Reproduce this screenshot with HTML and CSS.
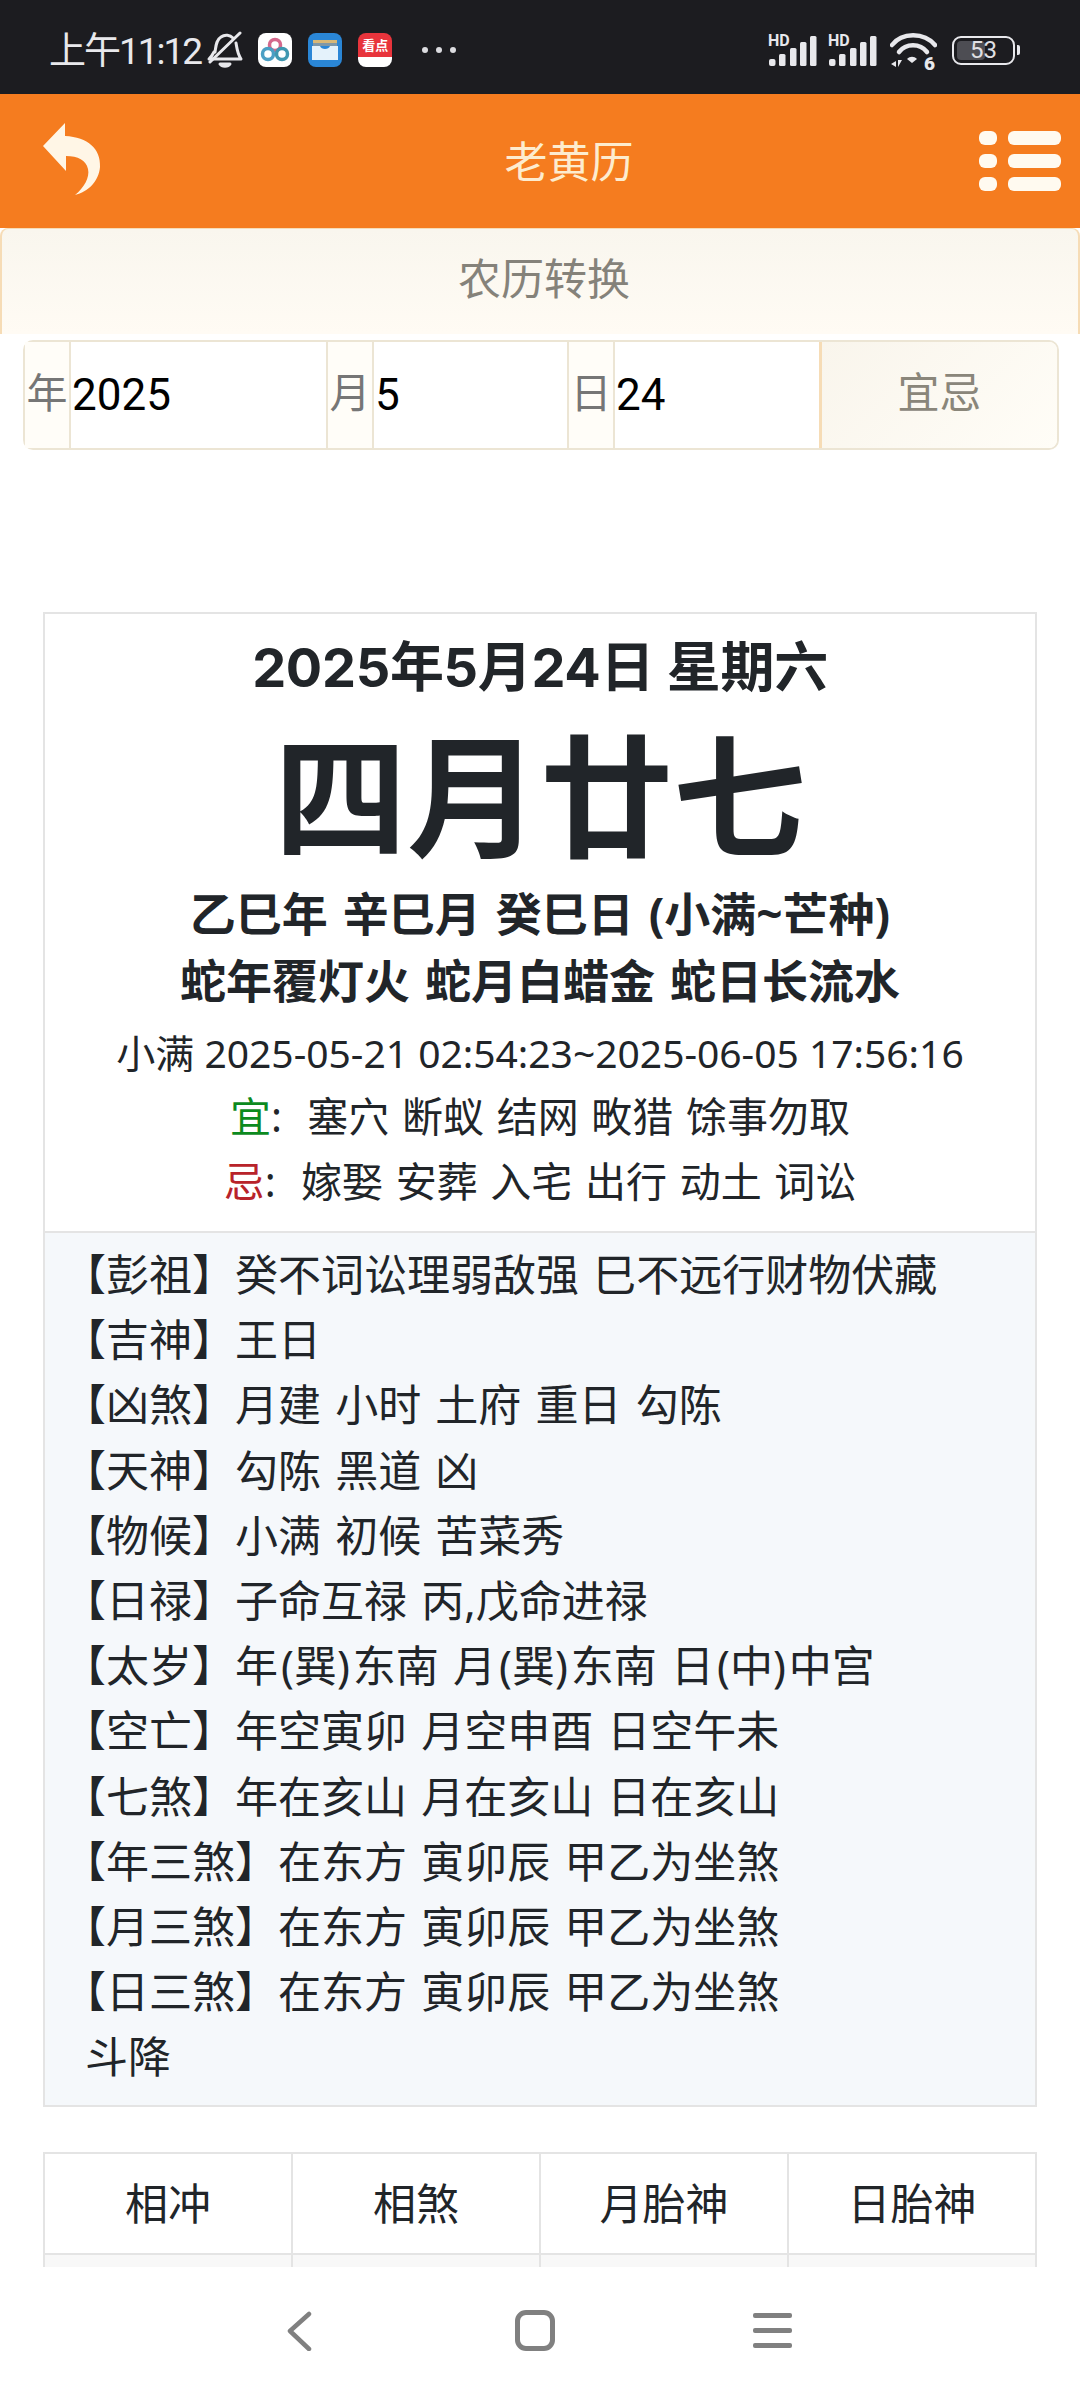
FILE: index.html
```html
<!DOCTYPE html>
<html lang="zh-CN">
<head>
<meta charset="utf-8" />
<meta name="viewport" content="width=device-width,initial-scale=1" />
<title>老黄历</title>
<link rel="stylesheet" href="styles.css">
</head>
<body>
<div class="phone">

  <!-- status bar -->
  <div class="status">
    <div class="statusLeft">
      <span class="clock">上午11:12</span>
      <svg class="bell" viewBox="0 0 36 38" fill="none" stroke="#e8e8ec" stroke-width="3" stroke-linecap="round" stroke-linejoin="round">
        <path d="M8 21 C9 15 9 9 14 6 C18 3 23 4 26 7"/>
        <path d="M29 12 C30 17 30 22 34 28 L2 28 C5 25 6 23 7 21"/>
        <path d="M3 31 L33 2"/>
        <path d="M13 33 C15 36 21 36 23 33 Z" fill="#e8e8ec"/>
      </svg>
      <div class="appIcons">
        <svg class="app" viewBox="0 0 34 34">
          <rect width="34" height="34" rx="8" fill="#fff"/>
          <circle cx="17" cy="12" r="5.5" fill="none" stroke="#d4688c" stroke-width="3.5"/>
          <circle cx="10" cy="21" r="5.5" fill="none" stroke="#4b9fc4" stroke-width="3.5"/>
          <circle cx="24" cy="21" r="5.5" fill="none" stroke="#3f97b0" stroke-width="3.5"/>
        </svg>
        <svg class="app" viewBox="0 0 34 34">
          <rect width="34" height="34" rx="8" fill="#2a86d6"/>
          <rect x="5" y="7" width="24" height="3" fill="#d8b877"/>
          <rect x="5" y="10" width="24" height="3" fill="#7f98a8"/>
          <path d="M4 13 L12 13 C13 17 21 17 22 13 L30 13 L30 27 L4 27 Z" fill="#e4f2fb"/>
        </svg>
        <div class="app kandian"><span>看点</span></div>
      </div>
      <div class="moreDots"><i></i><i></i><i></i></div>
    </div>
    <div class="statusRight">
      <svg class="signal" viewBox="0 -8 49 40">
        <text x="0" y="12" class="hd">HD</text>
        <g fill="#e8e8ec">
          <rect x="1" y="25" width="6.5" height="7" rx="2"/>
          <rect x="11" y="20" width="6.5" height="12" rx="1.5"/>
          <rect x="22" y="14" width="6.5" height="18" rx="1.5"/>
          <rect x="32" y="8" width="6.5" height="24" rx="1.5"/>
          <rect x="42" y="2" width="6.5" height="30" rx="1.5"/>
        </g>
      </svg>
      <svg class="signal" viewBox="0 -8 49 40">
        <text x="0" y="12" class="hd">HD</text>
        <g fill="#e8e8ec">
          <rect x="1" y="25" width="6.5" height="7" rx="2"/>
          <rect x="11" y="20" width="6.5" height="12" rx="1.5"/>
          <rect x="22" y="14" width="6.5" height="18" rx="1.5"/>
          <rect x="32" y="8" width="6.5" height="24" rx="1.5"/>
          <rect x="42" y="2" width="6.5" height="30" rx="1.5"/>
        </g>
      </svg>
      <svg class="wifi" viewBox="0 0 47 46" fill="none" stroke="#e8e8ec" stroke-width="4.5" stroke-linecap="round">
        <path d="M2 14 C12 1 34 1 45 14"/>
        <path d="M9 21 C16 12 30 12 37 21"/>
        <path d="M17 28 L22 32 L27 28 C24 25 20 25 17 28 Z" fill="#e8e8ec" stroke="none"/>
        <path d="M1 33 L6 30 L6 36 Z M8 29 L8 36 L12 29 Z" fill="#e8e8ec" stroke="none"/>
        <text x="34" y="39" class="wifiSix">6</text>
      </svg>
      <div class="battery">
        <div class="batteryBody"><i></i><span>53</span></div>
        <div class="batteryNub"></div>
      </div>
    </div>
  </div>

  <!-- orange header -->
  <header class="topbar">
    <svg class="backArrow" viewBox="43 124 58 72"><path d="M43 147 L65 124 L65 137 C88 138 101 150 100 168 C99 182 88 193 75 196 C84 189 90 178 88 170 C86 161 78 157 66 157 L66 172 Z"/></svg>
    <div class="topTitle">老黄历</div>
    <div class="menuBtn">
      <div class="menuRow"><i></i><b></b></div>
      <div class="menuRow"><i></i><b></b></div>
      <div class="menuRow"><i></i><b></b></div>
    </div>
  </header>

  <div class="subhead">农历转换</div>

  <div class="content">
    <!-- date form -->
    <div class="dateForm">
      <div class="addon">年</div>
      <div class="field fieldY">2025</div>
      <div class="addon">月</div>
      <div class="field fieldM">5</div>
      <div class="addon">日</div>
      <div class="field fieldD">24</div>
      <div class="goBtn">宜忌</div>
    </div>

    <!-- main card -->
    <div class="card">
      <div class="cardTop">
        <div class="solar">2025年5月24日 星期六</div>
        <div class="lunar">四月廿七</div>
        <div class="ganzhi">乙巳年 辛巳月 癸巳日 (小满~芒种)</div>
        <div class="ganzhi">蛇年覆灯火 蛇月白蜡金 蛇日长流水</div>
        <div class="term">小满 2025-05-21 02:54:23~2025-06-05 17:56:16</div>
        <div class="yiji"><span class="yi">宜</span>:&nbsp; 塞穴 断蚁 结网 畋猎 馀事勿取</div>
        <div class="yiji"><span class="ji">忌</span>:&nbsp; 嫁娶 安葬 入宅 出行 动土 词讼</div>
      </div>
      <div class="cardList">
        <div>【彭祖】癸不词讼理弱敌强 巳不远行财物伏藏</div>
        <div>【吉神】王日</div>
        <div>【凶煞】月建 小时 土府 重日 勾陈</div>
        <div>【天神】勾陈 黑道 凶</div>
        <div>【物候】小满 初候 苦菜秀</div>
        <div>【日禄】子命互禄 丙,戊命进禄</div>
        <div>【太岁】年<span class="dir">(巽)</span>东南 月<span class="dir">(巽)</span>东南 日<span class="dir">(中)</span>中宫</div>
        <div>【空亡】年空寅卯 月空申酉 日空午未</div>
        <div>【七煞】年在亥山 月在亥山 日在亥山</div>
        <div>【年三煞】在东方 寅卯辰 甲乙为坐煞</div>
        <div>【月三煞】在东方 寅卯辰 甲乙为坐煞</div>
        <div>【日三煞】在东方 寅卯辰 甲乙为坐煞</div>
        <div class="extra">斗降</div>
      </div>
    </div>

    <table class="godTable">
      <tr><th>相冲</th><th>相煞</th><th>月胎神</th><th>日胎神</th></tr>
      <tr class="nextRow"><td></td><td></td><td></td><td></td></tr>
    </table>
  </div>

  <!-- system nav -->
  <nav class="sysnav">
    <svg class="navBack" viewBox="0 0 28 40" fill="none" stroke="#808080" stroke-width="4.5" stroke-linecap="round" stroke-linejoin="round"><path d="M24 3 L5 20 L24 38"/></svg>
    <div class="navHome"></div>
    <div class="navMenu"><i></i><i></i><i></i></div>
  </nav>
</div>
</body>
</html>
```

FILE: styles.css
```css
/* ===== base ===== */
*{box-sizing:border-box}
html,body{margin:0;background:#fff;color:#212529;font:400 42px/1.5 "Noto Sans","Noto Sans CJK SC",sans-serif}
.phone{width:1080px;height:2400px;display:flex;flex-direction:column;overflow:hidden}

/* ===== status bar ===== */
.status{height:94px;flex:none;background:#1c1c20;display:flex;justify-content:space-between;align-items:center;padding:6px 60px 0 49px}
.statusLeft,.statusRight{display:flex;align-items:center}
.clock{font:400 37px/1 "Roboto","Noto Sans CJK SC",sans-serif;letter-spacing:-2px;color:#e8e8ec;white-space:nowrap;padding-top:2px}
.bell{width:36px;height:38px;margin-left:6px}
.appIcons{display:flex;gap:16px;margin-left:15px}
.app{width:34px;height:34px;display:block}
.kandian{border-radius:8px;overflow:hidden;background:linear-gradient(#e8343c 0 72%,#fff 72%);text-align:center}
.kandian span{display:block;font:700 13px/24px "Noto Sans CJK SC",sans-serif;color:#fff;white-space:nowrap}
.moreDots{display:flex;gap:8px;margin-left:30px}
.moreDots i{width:6px;height:6px;border-radius:50%;background:#dcdce0}

.statusRight svg{display:block}
.signal{width:49px;height:40px;margin:-8px 11px 0 0}
.hd{font:700 16px "Roboto",sans-serif;fill:#e8e8ec}
.wifi{width:47px;height:46px;margin:0 0 -7px 2px}
.wifiSix{font:900 19px "Roboto",sans-serif;fill:#e8e8ec;stroke:none}
.battery{display:flex;align-items:center;margin-left:15px}
.batteryBody{position:relative;width:63px;height:29px;border:2.5px solid #e8e8ec;border-radius:9px;text-align:center;font:400 24px/24px "Roboto",sans-serif;color:#e0e0e4}
.batteryBody i{position:absolute;left:3px;top:3px;bottom:3px;width:28px;background:#4d4d53;border-radius:4px}
.batteryBody span{position:relative}
.batteryNub{width:3px;height:10px;margin-left:2px;background:#e8e8ec;border-radius:0 2px 2px 0}

/* ===== orange header ===== */
.topbar{height:134px;flex:none;background:#f57c1f;display:flex;justify-content:space-between;align-items:center;padding:0 19px 0 43px}
.backArrow{width:58px;height:72px;fill:#fff6e6;margin-top:-4px}
.topTitle{margin-left:58px;font-size:43px;line-height:1;color:#fdeccf}
.menuBtn{display:flex;flex-direction:column;gap:9px;margin-top:-1px}
.menuRow{display:flex;gap:11px}
.menuRow i{width:18px;height:14px;border-radius:6px;background:#fffaf0}
.menuRow b{width:53px;height:14px;border-radius:6px;background:#fffaf0}

/* ===== sub header ===== */
.subhead{height:106px;flex:none;background:linear-gradient(#f9f6ee,#fffbf4);border:solid #f6dcb6;border-width:1px 2px 0;border-radius:8px 8px 0 0;padding-left:8px;text-align:center;font-size:43px;line-height:100px;color:#85827a}

/* ===== content scroll area ===== */
.content{flex:1;min-height:0;overflow:hidden;padding-top:6px}

.dateForm{height:110px;margin:0 21px 0 23px;display:flex;border:2px solid #ece5d4;border-radius:10px;font-size:42px;line-height:100px}
.addon{flex:none;width:46px;text-align:center;color:#767676;background:#fffdf8;border-right:2px solid #ece5d4;white-space:nowrap;overflow:visible;font-size:41px}
.field{flex:none;color:#000;background:#fff;padding-left:1px;border-right:2px solid #ece5d4;font-family:"Roboto","Noto Sans CJK SC",sans-serif;font-size:44px;line-height:106px}
.fieldY{width:257px}
.fieldM{width:195px}
.fieldD{width:207px;border-right:3px solid #f6dcb6}
.goBtn{flex:1;text-align:center;color:#8a867a;background:linear-gradient(135deg,#f9f5ec,#fffdf7);border-radius:0 8px 8px 0}

/* ===== main card ===== */
.card{margin:162px 43px 0;border:2px solid #e4e4e4}
.cardTop{text-align:center;padding:22px 0 17px;background:#fff}
.solar{font-family:"Inter","Noto Sans CJK SC",sans-serif;font-size:54px;font-weight:700;letter-spacing:-.3px;line-height:64px;white-space:nowrap}
.lunar{font-size:133px;font-weight:700;line-height:136px;margin-top:28px;white-space:nowrap}
.ganzhi{font-size:46px;font-weight:700;line-height:67px;word-spacing:3px}
.lunar + .ganzhi{margin-top:16px}
.term{font-size:39px;line-height:62px;margin-top:8px;white-space:nowrap}
.yiji{font-size:41px;line-height:65px;word-spacing:2px}
.yi{color:#0c8a1e}
.ji{color:#b8232a}

.cardList{background:#f5f8fb;border-top:2px solid #e4e4e4;padding:9px 0 15px 18px;font-size:43px;line-height:65.2px;white-space:nowrap;word-spacing:3px}
.cardList .extra{padding-left:22px}
.dir{padding:0 3px}

/* ===== table under the card ===== */
.godTable{width:994px;margin:45px 43px 0;border-collapse:collapse;table-layout:fixed}
.godTable th,.godTable td{border:2px solid #e4e4e4;text-align:center;font-weight:400;font-size:43px;padding:0}
.godTable th{height:101px;padding-top:3px}
.godTable .nextRow td{height:60px;background:#f8f8f8}

/* ===== system nav ===== */
.sysnav{height:133px;flex:none;background:#fff;display:flex;align-items:center;gap:198px;padding:0 0 6px 285px;position:relative}
.navBack{width:28px;height:40px}
.navHome{width:40px;height:41px;margin-left:4px;border:5px solid #808080;border-radius:11px}
.navMenu{display:flex;flex-direction:column;gap:10px}
.navMenu i{display:block;width:39px;height:5px;border-radius:2px;background:#808080}
```
